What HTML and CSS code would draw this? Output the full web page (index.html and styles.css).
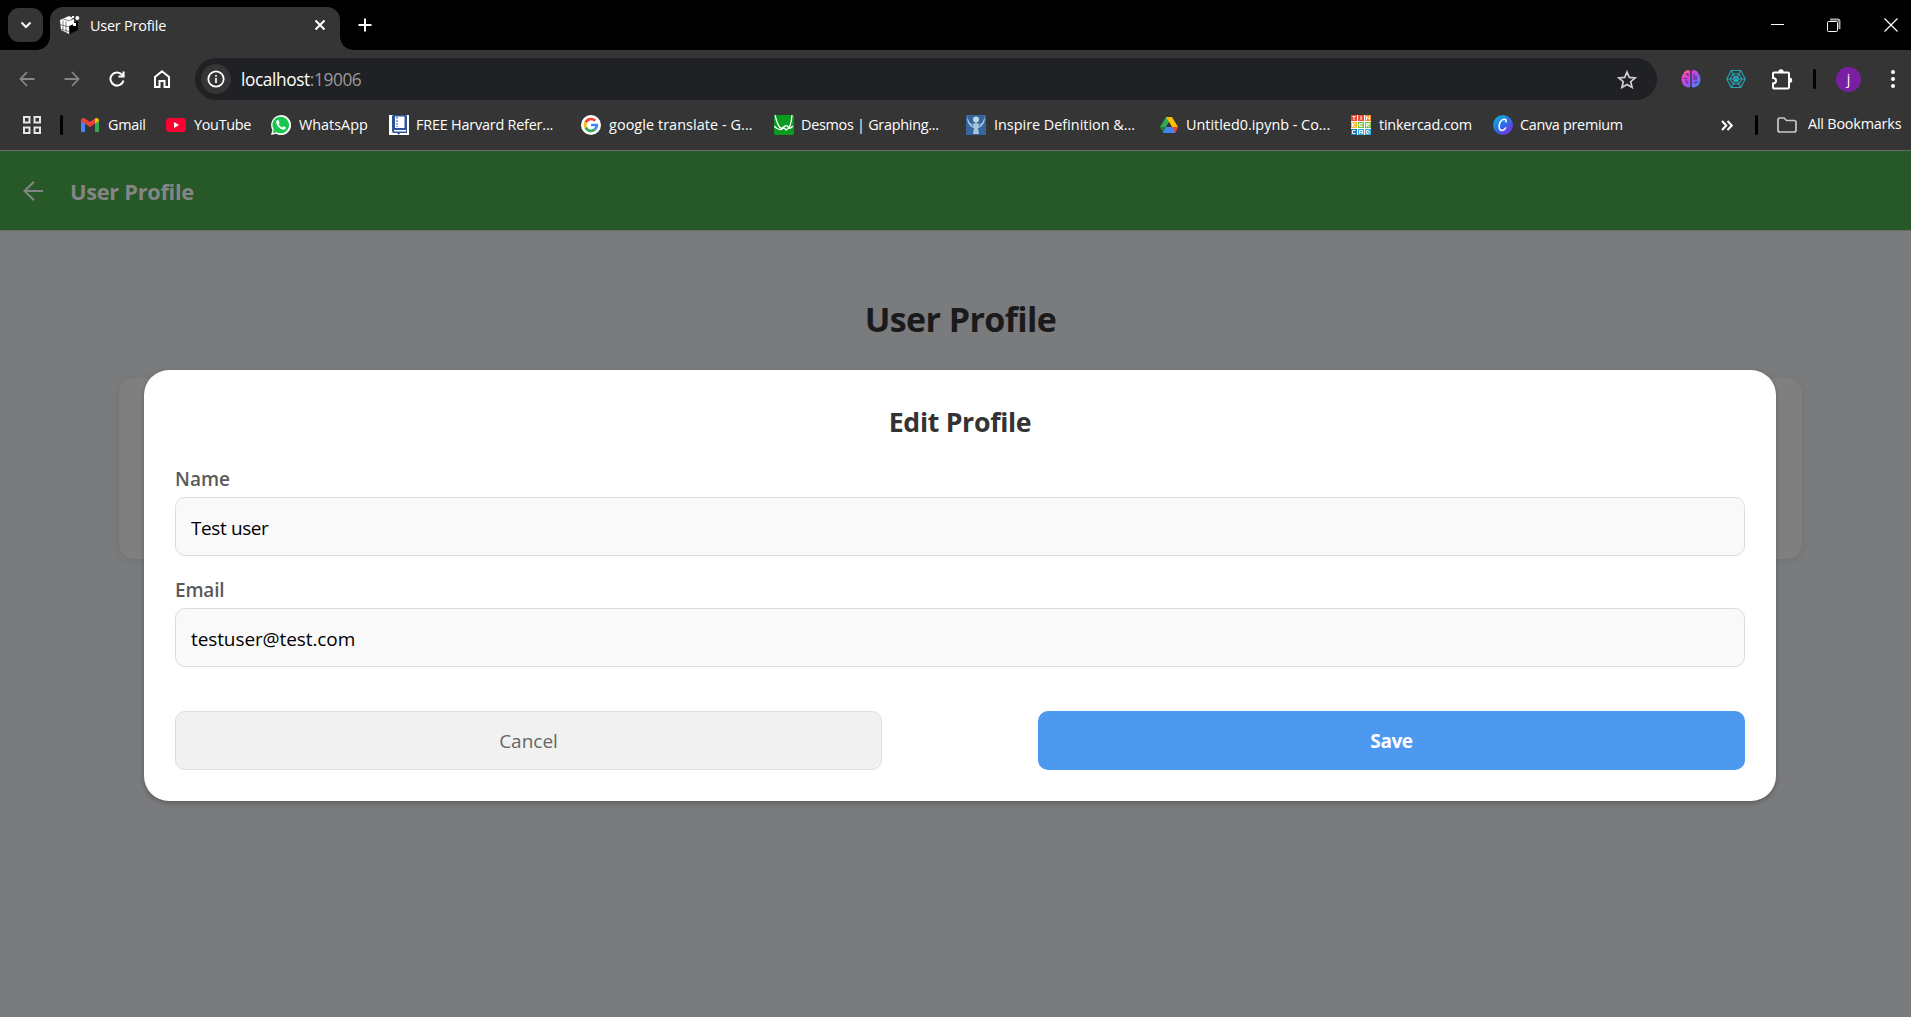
FILE: index.html
```html
<!DOCTYPE html>
<html lang="en">
<head>
<meta charset="utf-8">
<title>User Profile</title>
<link rel="stylesheet" href="styles.css">
</head>
<body>
<div class="window">
  <div class="tabstrip">
    <button class="tab-search"><svg width="12" height="8" viewBox="0 0 12 8"><path d="M1.5 1.5 6 6l4.500-4.500" fill="none" stroke="#fff" stroke-width="2"/></svg></button>
    <div class="tab">
      <svg class="favicon" width="20" height="20" viewBox="0 0 20 20"><path d="M10 10 18 6v9l-8 4z" fill="#000"/><path d="M0 5 9 1l4 2-4 3v13L1 15z" fill="#fff"/><path d="M0 9.500 9 12M1 14l8 2.500M3 5.500v10M6 6.500V18M3 4l7 2" stroke="#353535" stroke-width=".6" fill="none"/><path d="m9 6 5-2v5l-5 2z" fill="#fff"/><circle cx="17.300" cy="3" r="2" fill="#fff"/><path d="M13 8h3v3h-3zM12 1h2v2h-2z" fill="#fff"/></svg>
      <span class="tab-title">User Profile</span>
      <svg class="tab-close" width="12" height="12" viewBox="0 0 12 12"><path d="m1.500 1.500 9 9m0-9-9 9" stroke="#fff" stroke-width="2"/></svg>
    </div>
    <svg class="new-tab" width="14" height="14" viewBox="0 0 14 14"><path d="M7 .5v13M.5 7h13" stroke="#fff" stroke-width="2"/></svg>
    <div class="controls">
      <svg width="13" height="13" viewBox="0 0 13 13"><path d="M0 5.500h13" stroke="#fff"/></svg>
      <svg width="14" height="14" viewBox="0 0 14 14"><path d="M3 1.500h7.500q2 0 2 2V11" fill="none" stroke="#aaa" stroke-width="2"/><rect x=".5" y="3.500" width="10" height="10" rx="1" fill="#000" stroke="#fff"/></svg>
      <svg width="14" height="14" viewBox="0 0 14 14"><path d="m.5.5 13 13m0-13-13 13" stroke="#fff" stroke-width="1.200"/></svg>
    </div>
  </div>

  <div class="toolbar">
    <svg class="nav-icon" width="16" height="16" viewBox="0 0 16 16"><path d="M15.500 8H2M8 1 1.500 8 8 15" fill="none" stroke="#868686" stroke-width="1.800"/></svg>
    <svg class="nav-icon" width="16" height="16" viewBox="0 0 16 16"><path d="M.5 8H14M8 1l6.500 7L8 15" fill="none" stroke="#868686" stroke-width="1.800"/></svg>
    <svg class="nav-icon" width="16" height="16" viewBox="0 0 16 16"><path d="M14.500 9.500A6.600 6.600 0 1 1 13 3.600L14.500 5" fill="none" stroke="#fff" stroke-width="2"/><path d="M15.600.5v6H9.500V4.600h4V.5z" fill="#fff"/></svg>
    <svg class="nav-icon" width="16" height="18" viewBox="0 0 16 18"><path d="M1 17V7l7-5.700L15 7v10h-4.500v-6h-5v6z" fill="none" stroke="#fff" stroke-width="2"/></svg>
    <div class="omnibox">
      <span class="site-info"><svg width="18" height="18" viewBox="0 0 18 18"><circle cx="9" cy="9" r="7.700" fill="none" stroke="#fff" stroke-width="1.800"/><path d="M9 8v5M9 5v1.800" stroke="#fff" stroke-width="1.700"/></svg></span>
      <span class="url">localhost<span class="port">:19006</span></span>
      <svg class="star" width="20" height="19" viewBox="0 0 20 19"><path d="m10 2 2.300 5.400 5.900.5-4.500 3.800 1.400 5.700-5.100-3-5.100 3 1.400-5.700L1.800 7.900l5.900-.5z" fill="none" stroke="#d0d0d0" stroke-width="1.700"/></svg>
    </div>
    <div class="extensions">
      <svg width="20" height="20" viewBox="0 0 20 20"><defs><linearGradient id="brain" x1="0" y1="0" x2="1" y2="1"><stop offset="0" stop-color="#ff9d28"/><stop offset=".25" stop-color="#f03ccc"/><stop offset=".6" stop-color="#9653f5"/><stop offset="1" stop-color="#26a5f5"/></linearGradient></defs><path d="M9.300 2Q7 .3 5 1.800 2.500 2.500 2.500 5 .4 6.500.8 9-.2 11.500 1.500 14q.5 3 4 3.700Q8 19.500 9.300 17.500zM10.700 2Q13 .3 15 1.800q2.500.7 2.500 3.200 2.100 1.500 1.700 4 1 2.500-.7 5-.5 3-4 3.700-2.500 1.800-3.800-.2z" fill="url(#brain)"/><path d="M2.500 9q2 2 4 0M5 5h2v2m-1 8v-3H4m9-7v3h3m-4 2h4m-2 5v-2h3" fill="none" stroke="#3d347d" stroke-width="1"/></svg>
      <svg width="20" height="20" viewBox="0 0 20 20"><path d="M5.200 1.500h9.600L19.300 10l-4.500 8.500H5.200L.7 10zM7 5h6l3 5-3 5H7l-3-5zM8.500 7.500h3L13 10l-1.500 2.500h-3L7 10zM.7 10h18.600M5.200 1.500l9.600 17M14.800 1.500l-9.600 17" fill="none" stroke="#27a4b5" stroke-width="1.100"/></svg>
      <svg width="22" height="21" viewBox="0 0 22 21"><path d="M2 4.500q0-1 1-1h14q1 0 1 1V18q0 1.500-1.500 1.500H3q-1 0-1-1v-4c4 0 4-5.500 0-5.500z" fill="none" stroke="#fff" stroke-width="2"/><path d="M7.300 3a2.700 2.700 0 0 1 5.400 0zM18.500 8.500a2.700 2.700 0 0 1 0 5.400z" fill="#fff"/></svg>
    </div>
    <span class="divider toolbar-divider"></span>
    <span class="avatar">j</span>
    <svg class="menu" width="4" height="18" viewBox="0 0 4 18"><g fill="#fff"><circle cx="2" cy="2" r="2"/><circle cx="2" cy="9" r="2"/><circle cx="2" cy="16" r="2"/></g></svg>
  </div>

  <div class="bookmarks">
    <svg class="apps" width="18" height="18" viewBox="0 0 18 18"><path d="M1 1h5.500v5.500H1zM11.500 1H17v5.500h-5.500zM1 11.500h5.500V17H1zM11.500 11.500H17V17h-5.500z" fill="none" stroke="#e6e6e6" stroke-width="2"/></svg>
    <span class="divider"></span>
    <div class="bookmark-list">
      <div class="bookmark gmail"><svg width="20" height="20" viewBox="0 0 20 20"><path d="M1 5v11q0 1 1 1h3V8z" fill="#4285f4"/><path d="M15 8v9h3q1 0 1-1V5z" fill="#34a853"/><path d="M1 5q1-3 4-1.500L10 7l5-3.500v5L10 12 1 6z" fill="#ea4335"/><path d="M15 8.500v-5Q18 2 19 5v1z" fill="#fbbc04"/></svg><span>Gmail</span></div>
      <div class="bookmark youtube"><svg width="20" height="20" viewBox="0 0 20 20"><rect y="3" width="20" height="14" rx="3.500" fill="#ff0033"/><path d="m8 7 5 3-5 3z" fill="#fff"/></svg><span>YouTube</span></div>
      <div class="bookmark whatsapp"><svg width="20" height="20" viewBox="0 0 20 20"><path d="m0 20 1.400-5A10 10 0 1 1 5 18.700z" fill="#fff"/><path d="m1.800 18.200 1-3.700a8.300 8.300 0 1 1 2.900 2.700z" fill="#16c64d"/><path d="M6.500 5q-2 1-1 3.500 2 5 6.500 6.300 2.500 0 3-2.300l-2.400-1.300-1.300 1.400q-2.500-1-3.700-3.400l1-1.200-1-2.800z" fill="#fff"/></svg><span>WhatsApp</span></div>
      <div class="bookmark harvard"><svg width="20" height="20" viewBox="0 0 20 20"><path d="M0 0h20v20H0z" fill="#fff"/><path d="M4 0h13q1 0 1 1v17H11l-1 2-2-2H5q-2 0-2-2V1z" fill="#2c539b"/><path d="M6 1.500h9.500V13H6zM5 15h12v1.500H5z" fill="#fff"/><path d="M8 2v10" stroke="#2c539b" stroke-dasharray="2 1"/></svg><span>FREE Harvard Refer...</span></div>
      <div class="bookmark google"><svg width="20" height="20" viewBox="0 0 20 20"><circle cx="10" cy="10" r="10" fill="#fff"/><g fill="none" stroke-width="2.700"><path d="M14.200 5.800A5.900 5.900 0 0 0 4.700 7.300" stroke="#ea4335"/><path d="M4.700 7.300a5.900 5.900 0 0 0 0 5.400" stroke="#fbbc04"/><path d="M4.700 12.700a5.900 5.900 0 0 0 9.100 1.800" stroke="#34a853"/><path d="M13.800 14.500q2-1.800 2-4.500H10" stroke="#4285f4"/></g></svg><span>google translate - G...</span></div>
      <div class="bookmark desmos"><svg width="20" height="20" viewBox="0 0 20 20"><rect width="20" height="20" rx="2" fill="#0a9a20"/><path d="M1 0q4 16 8 12.500T14 12t5-1M0 11q5 5 8 3t4 1Q17 14 18 0" fill="none" stroke="#fff" stroke-width="1.300"/></svg><span>Desmos | Graphing...</span></div>
      <div class="bookmark inspire"><svg width="20" height="20" viewBox="0 0 20 20"><path d="M0 0h20v20H0z" fill="#34669b"/><circle cx="10" cy="4.500" r="3" fill="#bfd5e8"/><path d="M1 2q0 9 7 11l-1 6h6l-1-6q7-2 7-11l-3 6-4 1-2-2-2 2-4-1z" fill="#a6c3dd"/><path d="M3.500 5.500 7 11m9.500-5.500L13 11" stroke="#34669b"/></svg><span>Inspire Definition &amp;...</span></div>
      <div class="bookmark drive"><svg width="20" height="20" viewBox="0 0 20 20"><path d="M7 2h6l-3 5-6 10-3-5z" fill="#34a853"/><path d="M7 2h6l6 10h-6z" fill="#fbbc04"/><path d="M4 18 6.500 12H19l-3 6z" fill="#4285f4"/><path d="m4 18-3-6h5.500z" fill="#188038"/><path d="m16 18 3-6h-6z" fill="#ea4335"/><path d="m10 7.500 2.700 4.500H7.300z" fill="#353535"/></svg><span>Untitled0.ipynb - Co...</span></div>
      <div class="bookmark tinkercad"><svg width="20" height="20" viewBox="0 0 20 20"><path d="M0 0h20v20H0z" fill="#fff"/><path d="M0 0h6v6H0zM7 0h6v6H7z" fill="#e94b35"/><path d="M14 0h6v6h-6z" fill="#f48d35"/><path d="M0 7h6v6H0z" fill="#fdb822"/><path d="M7 7h6v6H7zM14 7h6v6h-6z" fill="#7bc143"/><path d="M0 14h6v6H0z" fill="#1777b7"/><path d="M7 14h6v6H7zM14 14h6v6h-6z" fill="#31a8df"/><path d="M1.500 1.500h3M3 1.500V5M10 1v4M15.500 5V1.500l3 3V1M1.500 8v4m3-4-3 2 3 2M11.500 8.500h-3v3h3M8.500 10h3M15.500 12V8.500h3V10h-3l3 2M4.500 15.500h-3v3h3M8.500 19v-3.500h3V19m-3-1.500h3M15.500 15.500h2l1 1.500-1 1.500h-2z" fill="none" stroke="#fff" stroke-width=".9"/></svg><span>tinkercad.com</span></div>
      <div class="bookmark canva"><svg width="20" height="20" viewBox="0 0 20 20"><defs><linearGradient id="canva" x1="0" y1="0" x2=".8" y2="1"><stop offset="0" stop-color="#00c4cc"/><stop offset=".5" stop-color="#2875e5"/><stop offset="1" stop-color="#7d2ae8"/></linearGradient></defs><circle cx="10" cy="10" r="10" fill="url(#canva)"/><path d="M12.500 7.500q2-3-1-3.200C7 4.500 5 11 6.500 14c1.500 2.500 5 1.500 6.500-1.500" fill="none" stroke="#fff" stroke-width="1.500"/></svg><span>Canva premium</span></div>
    </div>
    <svg class="overflow" width="12" height="11" viewBox="0 0 12 11"><path d="m1 1 4.300 4.500L1 10m5.500-9 4.300 4.500L6.500 10" fill="none" stroke="#fff" stroke-width="2"/></svg>
    <span class="divider overflow-divider"></span>
    <svg class="folder" width="20" height="16" viewBox="0 0 20 16"><path d="M1 3q0-2 2-2h4l2.500 2.500H17q2 0 2 2V13q0 2-2 2H3q-2 0-2-2z" fill="none" stroke="#c8c8c8" stroke-width="1.700"/></svg>
    <span class="all-bookmarks">All Bookmarks</span>
  </div>

  <div class="page">
    <header class="app-header">
      <svg width="20" height="20" viewBox="0 0 20 20"><path d="M20 10H1.500M11 .7 1.500 10l9.500 9.300" fill="none" stroke="#858585" stroke-width="2"/></svg>
      <span class="app-title">User Profile</span>
    </header>
    <main class="content">
      <h1><span>User Profile</span></h1>
      <section class="card"></section>
    </main>
    <div class="overlay">
      <form class="modal">
        <h2><span>Edit Profile</span></h2>
        <label class="name-label" for="name">Name</label>
        <input id="name" type="text" value="Test user">
        <label class="email-label" for="email">Email</label>
        <input id="email" type="text" value="testuser@test.com">
        <div class="actions">
          <button type="button" class="cancel">Cancel</button>
          <button type="button" class="save">Save</button>
        </div>
      </form>
    </div>
  </div>
</div>
</body>
</html>
```

FILE: styles.css
```css
* { box-sizing: border-box; }
html, body { margin: 0; height: 100%; overflow: hidden; }
body { background: #7a7b7d; font-family: "Open Sans", "Noto Sans", sans-serif; }
svg { display: block; flex: none; }
button { border: 0; padding: 0; font-family: inherit; }

.window { width: 1920px; height: 1017px; display: flex; flex-direction: column; overflow: hidden; }

/* Browser chrome */
.tabstrip { height: 50px; flex: none; background: #000; display: flex; align-items: center; }
.tab-search { width: 35px; height: 34px; margin-left: 8px; border-radius: 11px; background: #353535; display: grid; place-items: center; }
.tab { position: relative; width: 290px; height: 43px; margin: 7px 0 0 7px; padding: 0 14px 7px 10px; border-radius: 13px 13px 0 0; background: #353535; display: flex; align-items: center; }
.tab::before, .tab::after { content: ""; position: absolute; bottom: 0; width: 13px; height: 13px; }
.tab::before { left: -13px; background: radial-gradient(circle at 0 0, transparent 12.500px, #353535 13px); }
.tab::after { right: -13px; background: radial-gradient(circle at 100% 0, transparent 12.500px, #353535 13px); }
.tab-title { margin-left: 10px; color: #fff; font-size: 14.400px; letter-spacing: -.2px; white-space: nowrap; }
.tab-close { margin-left: auto; }
.new-tab { margin-left: 18px; }
.controls { margin: 0 22px 0 auto; display: flex; align-items: center; gap: 43px; }

.toolbar { height: 58px; flex: none; background: #353535; display: flex; align-items: center; padding-left: 19px; }
.nav-icon { margin-right: 29px; }
.omnibox { width: 1462px; height: 42px; margin-left: -4px; padding: 0 20px 0 6px; border-radius: 21px; background: #202124; display: flex; align-items: center; }
.site-info { width: 30px; height: 30px; border-radius: 50%; background: #353535; display: grid; place-items: center; }
.url { margin-left: 10px; color: #fff; font-size: 17.300px; letter-spacing: -.4px; }
.port { color: #9a9a9a; }
.star { margin-left: auto; }
.extensions { display: flex; align-items: center; gap: 25px; margin-left: 24px; }
.divider { width: 3px; height: 20px; border-radius: 2px; background: #000; flex: none; }
.toolbar-divider { margin-left: 20px; }
.avatar { width: 25px; height: 25px; margin-left: 20px; border-radius: 50%; background: #7b1fa2; color: #fff; font-size: 14px; line-height: 24px; text-align: center; }
.menu { margin-left: 30px; }

.bookmarks { height: 43px; flex: none; background: #353535; border-bottom: 1px solid #6a6a6a; display: flex; align-items: center; padding: 0 19px 8px 23px; color: #fff; font-size: 14.400px; letter-spacing: -.3px; white-space: nowrap; }
.bookmarks .divider { margin-left: 19px; }
.bookmark-list { display: flex; margin-left: 17px; }
.bookmark { display: flex; align-items: center; gap: 7px; line-height: 20px; }
.gmail { width: 86px; gap: 8px; }
.youtube { width: 105px; gap: 8px; }
.whatsapp { width: 118px; gap: 8px; letter-spacing: 0; }
.harvard { width: 192px; letter-spacing: -.2px; }
.google { width: 193px; gap: 8px; letter-spacing: .08px; }
.desmos { width: 192px; letter-spacing: -.27px; }
.inspire { width: 193px; gap: 8px; letter-spacing: 0; }
.drive { width: 192px; letter-spacing: 0; }
.tinkercad { width: 142px; gap: 8px; letter-spacing: -.2px; }
.canva { width: 132px; }
.overflow { margin-left: 96px; }
.bookmarks .overflow-divider { margin-left: 22px; }
.folder { margin-left: 19px; }
.all-bookmarks { margin-left: 11px; line-height: 18px; padding-bottom: 2px; letter-spacing: -.2px; }

/* App */
.page { position: relative; flex: 1; display: flex; flex-direction: column; background: #7a7b7d; }
.app-header { height: 80px; flex: none; background: #265828; border-bottom: 1px solid #6c6c6c; display: flex; align-items: center; padding: 0 0 0 23px; }
.app-title { margin: 2px 0 0 27px; color: #858585; font-size: 21.800px; font-weight: 700; letter-spacing: -.3px; }
.content { padding: 64px 118px 0 119px; text-align: center; }
h1 { margin: 0 0 34px; height: 49px; line-height: 49px; font-size: 34px; letter-spacing: -.6px; color: #1a1a1a; }
.card { height: 181px; border-radius: 15px; background: #7f7f7f; box-shadow: 0 2px 10px rgba(0,0,0,.08); }

.overlay { position: absolute; inset: 0; padding-top: 219px; display: flex; justify-content: center; align-items: flex-start; }
.modal { width: 1632px; height: 431px; padding: 30px 31px 31px; border-radius: 25px; background: #fff; box-shadow: 0 2px 5px rgba(0,0,0,.25); display: flex; flex-direction: column; }
h2 { margin: 0; height: 44px; line-height: 44px; text-align: center; font-size: 26.700px; letter-spacing: -.3px; color: #333; }
label { height: 27px; line-height: 27px; color: #5a5a5a; font-size: 19px; font-weight: 600; }
.name-label { margin-top: 22px; }
.email-label { margin-top: 21px; letter-spacing: -.2px; }
input { width: 100%; height: 59px; margin: 4px 0 0; padding: 2px 15px 0; border: 1px solid #ddd; border-radius: 10px; background: #f9f9f9; font: 400 19px "Open Sans", "Noto Sans", sans-serif; letter-spacing: -.4px; color: #000; outline: 0; }
input#email { margin-top: 0; letter-spacing: -.1px; }
.email-label { height: 31px; }
.actions { margin-top: auto; display: flex; justify-content: space-between; }
.actions button { width: 707px; height: 59px; border-radius: 10px; font-size: 19px; }
.actions .cancel { border: 1px solid #ddd; background: #f1f1f1; color: #666; padding-top: 1px; }
.actions .save { background: #4e99f0; color: #fff; font-weight: 700; letter-spacing: -.4px; }
```
